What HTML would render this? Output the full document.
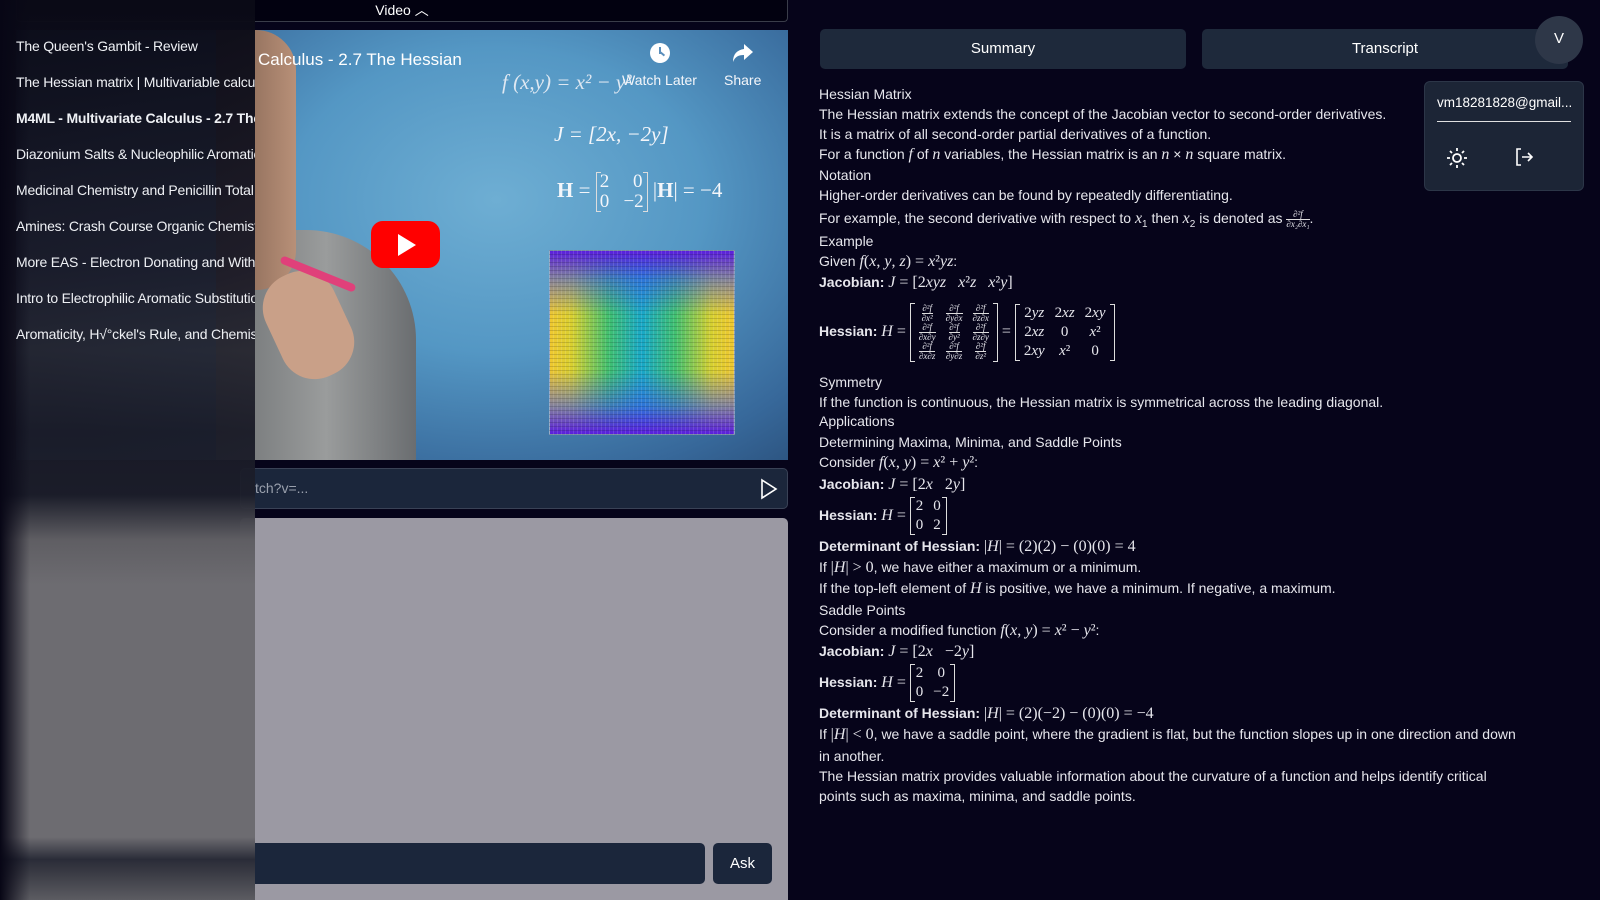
<!DOCTYPE html>
<html><head><meta charset="utf-8"><style>
*{margin:0;padding:0;box-sizing:border-box}
body{width:1600px;height:900px;background:#06041a;overflow:hidden;position:relative;font-family:"Liberation Sans",sans-serif;color:#e8e8ee}
.a{position:absolute}
.m{font-family:"Liberation Serif",serif;font-style:italic}
.r{font-family:"Liberation Serif",serif}
.ln{position:absolute;left:819px;font-size:14px;line-height:20px;white-space:nowrap;color:#e6e6ec}
b{font-weight:bold}
.mat{display:inline-block;vertical-align:middle;padding:0 4px;font-family:"Liberation Serif",serif;font-size:15px;line-height:19px;position:relative}
.mat::before,.mat::after{content:"";position:absolute;top:0;bottom:0;width:4px;border-top:1.5px solid #ddd;border-bottom:1.5px solid #ddd}
.mat::before{left:0;border-left:1.5px solid #ddd}
.mat::after{right:0;border-right:1.5px solid #ddd}
.mat table{border-collapse:collapse}
.mat td{padding:0 5px;text-align:center}
.fr{display:inline-block;vertical-align:middle;text-align:center;font-size:9px;line-height:9px;font-family:"Liberation Serif",serif;font-style:italic}
.fr span{display:block;border-top:1px solid #ddd}
.vt{font-family:"Liberation Serif",serif;color:#f4f6fa;position:absolute}
</style></head><body>

<div class="a" style="left:16px;top:0;width:772px;height:22px;border:1px solid #3a3d4a;border-top:none;border-radius:0 0 4px 4px;background:#020110;text-align:center;font-size:14px;line-height:21px;color:#fff">Video ︿</div>

<div class="a" style="left:16px;top:30px;width:772px;height:430px;overflow:hidden;background:radial-gradient(ellipse 520px 380px at 480px 170px,#6eaed3 0%,#5497c4 40%,#37689a 75%,#25466e 100%)">
  <div class="a" style="left:200px;top:200px;width:200px;height:260px;border-radius:60px 110px 0 0;background:linear-gradient(90deg,#6d7072,#9a9c9c 55%,#6a6d70)"></div>
  <div class="a" style="left:200px;top:0;width:80px;height:260px;border-radius:0 40px 40px 0;background:linear-gradient(90deg,#7a5c4c,#b89078)"></div>
  <div class="a" style="left:255px;top:240px;width:75px;height:110px;border-radius:35px;background:#c9a088;transform:rotate(-25deg)"></div>
  <div class="a" style="left:262px;top:240px;width:80px;height:8px;background:#e0407a;transform:rotate(22deg);border-radius:4px"></div>
  <div class="vt" style="left:242px;top:20px;font-family:'Liberation Sans',sans-serif;font-size:17px;color:#fff">Calculus - 2.7 The Hessian</div>
  <div class="vt m" style="left:486px;top:40px;font-size:21px;color:#dfe8f2">f (x,y) = x² − y²</div>
  <div class="vt m" style="left:538px;top:92px;font-size:21px">J = [2x, −2y]</div>
  <div class="vt" style="left:541px;top:142px;font-size:21px"><b>H</b> = <span class="mat" style="line-height:20px;font-size:19px;font-style:normal">2&nbsp;&nbsp;&nbsp;&nbsp;&nbsp;0<br>0&nbsp;&nbsp;&nbsp;−2</span> |<b>H</b>| = −4</div>
  <div class="a" style="left:533px;top:220px;width:186px;height:185px;border:1px solid #8aa0c0;background:linear-gradient(180deg,rgba(90,30,220,1) 0%,rgba(60,80,230,.6) 15%,rgba(0,0,0,0) 35%,rgba(0,0,0,0) 65%,rgba(60,80,230,.6) 85%,rgba(90,30,220,1) 100%),linear-gradient(90deg,#f0c830 0%,#d8d030 12%,#40c070 32%,#18a8c8 50%,#40c070 68%,#d8d030 88%,#f0c830 100%)"></div>
  <div class="a" style="left:533px;top:220px;width:186px;height:185px;background:repeating-linear-gradient(0deg,rgba(0,0,0,.15) 0 1px,transparent 1px 4px),repeating-linear-gradient(90deg,rgba(255,255,255,.12) 0 1px,transparent 1px 4px)"></div>
  <div class="a" style="left:355px;top:191px;width:69px;height:47px;background:#f00;border-radius:12px"></div>
  <div class="a" style="left:382px;top:204px;width:0;height:0;border-left:18px solid #fff;border-top:11px solid transparent;border-bottom:11px solid transparent"></div>
  <div class="a" style="left:634px;top:13px;width:20px;height:20px;border-radius:50%;background:#fff"></div>
  <div class="a" style="left:643px;top:17px;width:2px;height:7px;background:#5b8fbc"></div>
  <div class="a" style="left:644px;top:23px;width:5px;height:2px;background:#5b8fbc;transform:rotate(40deg)"></div>
  <div class="vt" style="left:606px;top:42px;font-family:'Liberation Sans',sans-serif;font-size:14px">Watch Later</div>
  <svg class="a" style="left:716px;top:13px" width="22" height="20" viewBox="0 0 22 20"><path d="M12 1 L21 9 L12 17 V12 C6 12 3 14 1 19 C1 11 5 7 12 6 Z" fill="#fff"/></svg>
  <div class="vt" style="left:708px;top:42px;font-family:'Liberation Sans',sans-serif;font-size:14px">Share</div>
</div>

<div class="a" style="left:240px;top:468px;width:548px;height:41px;border:1px solid #3a4256;border-radius:5px;background:#1b263b"></div>
<div class="a" style="left:255px;top:480px;font-size:14px;color:#9aa0ad">tch?v=...</div>
<svg class="a" style="left:760px;top:478px" width="18" height="22" viewBox="0 0 18 22"><path d="M2 2 L16 11 L2 20 Z" fill="none" stroke="#fff" stroke-width="1.6"/></svg>

<div class="a" style="left:240px;top:518px;width:548px;height:382px;border-radius:5px 5px 0 0;background:#9b99a3"></div>
<div class="a" style="left:240px;top:843px;width:465px;height:41px;border-radius:5px;background:#1b263b"></div>
<div class="a" style="left:713px;top:843px;width:59px;height:41px;border-radius:5px;background:#1b263b;color:#fff;font-size:15px;line-height:41px;text-align:center">Ask</div>

<div class="a" style="left:0;top:0;width:255px;height:900px;background:linear-gradient(180deg,rgba(10,10,22,.97) 0%,rgba(25,25,38,.94) 30%,rgba(35,35,45,.92) 39%,rgba(25,26,38,.95) 48%,rgba(28,30,42,.95) 55%,#5f5e63 60%,#6d6c71 65%,#6d6c71 93%,#2a2c38 95.5%,#3a3b44 97%,#5c5c62 100%)"></div>
<div class="a" style="left:0;top:0;width:30px;height:900px;background:linear-gradient(90deg,#070615,rgba(7,6,21,0))"></div>
<div class="a" style="left:16px;top:28px;width:239px;overflow:hidden;font-size:14px;line-height:36px;white-space:nowrap;color:#eef0f4;letter-spacing:-0.2px">
<div>The Queen's Gambit - Review</div>
<div>The Hessian matrix | Multivariable calculus</div>
<div style="font-weight:bold">M4ML - Multivariate Calculus - 2.7 The Hessian</div>
<div>Diazonium Salts &amp; Nucleophilic Aromatic</div>
<div>Medicinal Chemistry and Penicillin Total</div>
<div>Amines: Crash Course Organic Chemistry</div>
<div>More EAS - Electron Donating and Withdrawing</div>
<div>Intro to Electrophilic Aromatic Substitution</div>
<div>Aromaticity, H√°ckel's Rule, and Chemistry</div>
</div>

<div class="a" style="left:820px;top:29px;width:366px;height:40px;border-radius:5px;background:#1e293b;color:#fff;font-size:15px;line-height:40px;text-align:center">Summary</div>
<div class="a" style="left:1202px;top:29px;width:366px;height:40px;border-radius:5px;background:#1e293b;color:#fff;font-size:15px;line-height:40px;text-align:center">Transcript</div>
<div class="a" style="left:1535px;top:16px;width:48px;height:48px;border-radius:50%;background:#2e3748;color:#fff;font-size:15px;line-height:46px;text-align:center">V</div>
<div class="a" style="left:1424px;top:81px;width:160px;height:110px;border:1px solid #2c3648;border-radius:6px;background:#1c2536"></div>
<div class="a" style="left:1437px;top:95px;font-size:13.5px;color:#fff">vm18281828@gmail...</div>
<div class="a" style="left:1437px;top:121px;width:134px;height:1px;background:#e0e0e0"></div>
<svg class="a" style="left:1446px;top:147px" width="22" height="22" viewBox="0 0 22 22" stroke="#fff" stroke-width="1.8" fill="none"><circle cx="11" cy="11" r="4"/><path d="M11 1v3M11 18v3M1 11h3M18 11h3M4 4l2 2M16 16l2 2M4 18l2-2M16 6l2-2"/></svg>
<svg class="a" style="left:1514px;top:147px" width="20" height="20" viewBox="0 0 20 20" stroke="#fff" stroke-width="1.6" fill="none"><path d="M7 2H3v16h4M8 10h10M14 6l4 4-4 4"/></svg>

<div class="ln" style="top:84px">Hessian Matrix</div>
<div class="ln" style="top:104px">The Hessian matrix extends the concept of the Jacobian vector to second-order derivatives.</div>
<div class="ln" style="top:124px">It is a matrix of all second-order partial derivatives of a function.</div>
<div class="ln" style="top:144px">For a function <span class="m" style="font-size:16px">f</span> of <span class="m" style="font-size:16px">n</span> variables, the Hessian matrix is an <span class="m" style="font-size:16px">n</span> × <span class="m" style="font-size:16px">n</span> square matrix.</div>
<div class="ln" style="top:165px">Notation</div>
<div class="ln" style="top:185px">Higher-order derivatives can be found by repeatedly differentiating.</div>
<div class="ln" style="top:208px">For example, the second derivative with respect to <span class="m" style="font-size:16px">x</span><sub style="font-size:10px">1</sub> then <span class="m" style="font-size:16px">x</span><sub style="font-size:10px">2</sub> is denoted as <span class="fr">∂²f<span>∂x₂∂x₁</span></span>.</div>
<div class="ln" style="top:231px">Example</div>
<div class="ln" style="top:251px">Given <span class="m" style="font-size:16px">f</span><span class="r" style="font-size:16px">(<i>x</i>, <i>y</i>, <i>z</i>) = <i>x</i>²<i>yz</i></span>:</div>
<div class="ln" style="top:272px"><b>Jacobian:</b> <span class="r" style="font-size:16px"><i>J</i> = [2<i>xyz</i>&nbsp;&nbsp;&nbsp;<i>x</i>²<i>z</i>&nbsp;&nbsp;&nbsp;<i>x</i>²<i>y</i>]</span></div>
<div class="ln" style="top:291px;line-height:80px;height:80px"><b>Hessian:</b> <span class="r" style="font-size:16px"><i>H</i> =</span>
<span class="mat" style="padding:1px 4px"><table>
<tr><td><span class="fr">∂²f<span>∂x²</span></span></td><td><span class="fr">∂²f<span>∂y∂x</span></span></td><td><span class="fr">∂²f<span>∂z∂x</span></span></td></tr>
<tr><td><span class="fr">∂²f<span>∂x∂y</span></span></td><td><span class="fr">∂²f<span>∂y²</span></span></td><td><span class="fr">∂²f<span>∂z∂y</span></span></td></tr>
<tr><td><span class="fr">∂²f<span>∂x∂z</span></span></td><td><span class="fr">∂²f<span>∂y∂z</span></span></td><td><span class="fr">∂²f<span>∂z²</span></span></td></tr></table></span>
<span class="r" style="font-size:16px"> = </span>
<span class="mat"><table><tr><td>2<i>yz</i></td><td>2<i>xz</i></td><td>2<i>xy</i></td></tr><tr><td>2<i>xz</i></td><td>0</td><td><i>x</i>²</td></tr><tr><td>2<i>xy</i></td><td><i>x</i>²</td><td>0</td></tr></table></span></div>
<div class="ln" style="top:372px">Symmetry</div>
<div class="ln" style="top:392px">If the function is continuous, the Hessian matrix is symmetrical across the leading diagonal.</div>
<div class="ln" style="top:411px">Applications</div>
<div class="ln" style="top:432px">Determining Maxima, Minima, and Saddle Points</div>
<div class="ln" style="top:452px">Consider <span class="r" style="font-size:16px"><i>f</i>(<i>x</i>, <i>y</i>) = <i>x</i>² + <i>y</i>²</span>:</div>
<div class="ln" style="top:474px"><b>Jacobian:</b> <span class="r" style="font-size:16px"><i>J</i> = [2<i>x</i>&nbsp;&nbsp;&nbsp;2<i>y</i>]</span></div>
<div class="ln" style="top:495px;line-height:40px;height:40px"><b>Hessian:</b> <span class="r" style="font-size:16px"><i>H</i> =</span> <span class="mat" style="padding:0 1px"><table><tr><td>2</td><td>0</td></tr><tr><td>0</td><td>2</td></tr></table></span></div>
<div class="ln" style="top:536px"><b>Determinant of Hessian:</b> <span class="r" style="font-size:16px">|<i>H</i>| = (2)(2) − (0)(0) = 4</span></div>
<div class="ln" style="top:557px">If <span class="r" style="font-size:16px">|<i>H</i>| &gt; 0</span>, we have either a maximum or a minimum.</div>
<div class="ln" style="top:578px">If the top-left element of <span class="m" style="font-size:16px">H</span> is positive, we have a minimum. If negative, a maximum.</div>
<div class="ln" style="top:600px">Saddle Points</div>
<div class="ln" style="top:620px">Consider a modified function <span class="r" style="font-size:16px"><i>f</i>(<i>x</i>, <i>y</i>) = <i>x</i>² − <i>y</i>²</span>:</div>
<div class="ln" style="top:641px"><b>Jacobian:</b> <span class="r" style="font-size:16px"><i>J</i> = [2<i>x</i>&nbsp;&nbsp;&nbsp;−2<i>y</i>]</span></div>
<div class="ln" style="top:662px;line-height:40px;height:40px"><b>Hessian:</b> <span class="r" style="font-size:16px"><i>H</i> =</span> <span class="mat" style="padding:0 1px"><table><tr><td>2</td><td>0</td></tr><tr><td>0</td><td>−2</td></tr></table></span></div>
<div class="ln" style="top:703px"><b>Determinant of Hessian:</b> <span class="r" style="font-size:16px">|<i>H</i>| = (2)(−2) − (0)(0) = −4</span></div>
<div class="ln" style="top:724px">If <span class="r" style="font-size:16px">|<i>H</i>| &lt; 0</span>, we have a saddle point, where the gradient is flat, but the function slopes up in one direction and down</div>
<div class="ln" style="top:746px">in another.</div>
<div class="ln" style="top:766px">The Hessian matrix provides valuable information about the curvature of a function and helps identify critical</div>
<div class="ln" style="top:786px">points such as maxima, minima, and saddle points.</div>
</body></html>
